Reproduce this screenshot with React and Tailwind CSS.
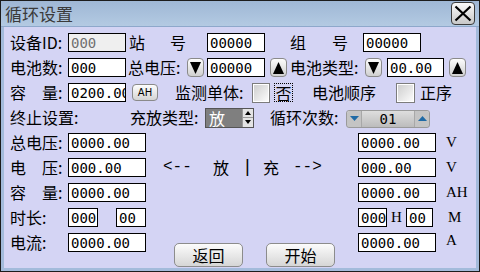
import React from "react";
import clsx from "clsx";

const Field = ({ className, children, disabled }) => (
  <div
    className={clsx(
      "shrink-0 h-[19px] border border-black flex items-center pl-[2px] overflow-hidden whitespace-nowrap font-['DejaVu_Sans_Mono',monospace] text-[14px] leading-none",
      disabled ? "bg-[#efefef] text-[#6f6f6f]" : "bg-white text-black",
      className
    )}
  >
    {children}
  </div>
);

const ArrowBtn = ({ up, className }) => (
  <div
    className={clsx(
      "shrink-0 w-[17px] h-[19px] rounded-[4px] border border-[#8a8a8a] bg-linear-to-b from-[#fdfdfd] to-[#d0d0d0] flex items-center justify-center",
      className
    )}
  >
    <svg width="11" height="12" viewBox="0 0 11 12">
      <polygon points={up ? "5.5,0 11,12 0,12" : "0,0 11,0 5.5,12"} fill="#000" />
    </svg>
  </div>
);

const Check = ({ className }) => (
  <div className={clsx("shrink-0 h-[20px] border border-[#7c7c7c] bg-white p-[1px]", className)}>
    <div className="w-full h-full bg-linear-to-br from-[#cfcfcf] to-[#fbfbfb]" />
  </div>
);

const Unit = ({ children, className }) => (
  <span className={clsx("shrink-0 font-['Liberation_Serif',serif] text-[15px] leading-none", className)}>
    {children}
  </span>
);

const BigButton = ({ children, className }) => (
  <div
    className={clsx(
      "shrink-0 w-[69px] h-[24px] rounded-[5px] border border-[#8c8c8c] bg-linear-to-b from-[#fcfcfc] to-[#d6d6d6] flex items-center justify-center text-[16px]",
      className
    )}
  >
    {children}
  </div>
);

export default function App() {
  return (
    <div className="w-[480px] h-[272px] border border-[#1c1c1c] bg-[#d4d4f4] flex flex-col text-black font-['Noto_Sans_CJK_SC',sans-serif] overflow-hidden">
      {/* title bar */}
      <div className="h-[26px] shrink-0 flex items-center justify-between pl-[4px] pr-[4px] bg-linear-to-b from-[#9fb7d5] to-[#b3cae2] border-b border-[#8ea8cb]">
        <span className="text-[17px] leading-none text-[#3a3a3a]">循环设置</span>
        <div className="w-[24px] h-[23px] rounded-[4px] border border-[#3c3c3c] bg-linear-to-b from-[#fafafa] to-[#c8c8c8] flex items-center justify-center">
          <svg width="18" height="17" viewBox="0 0 18 17">
            <path d="M1.5 1.5 L16.5 15.5 M16.5 1.5 L1.5 15.5" stroke="#000" strokeWidth="2.2" />
          </svg>
        </div>
      </div>

      {/* body */}
      <div className="flex-1 flex flex-col gap-[6px] pt-[6px] pl-[6px] border-l-[3px] border-r-[3px] border-b-[3px] border-[#a3bbdb] text-[16px] leading-[19px] whitespace-nowrap">
        {/* row 1 */}
        <div className="flex items-center h-[19px]">
          <span className="w-[58px] shrink-0">设备ID:</span>
          <Field disabled className="w-[58px]">000</Field>
          <span className="w-[44px] shrink-0 pl-[3px]">站</span>
          <span className="w-[37px] shrink-0">号</span>
          <Field className="w-[58px]">00000</Field>
          <span className="w-[67px] shrink-0 pl-[25px]">组</span>
          <span className="w-[31px] shrink-0">号</span>
          <Field className="w-[58px]">00000</Field>
        </div>

        {/* row 2 */}
        <div className="flex items-center h-[19px]">
          <span className="w-[58px] shrink-0">电池数:</span>
          <Field className="w-[58px]">000</Field>
          <span className="w-[61px] shrink-0 pl-[2px]">总电压:</span>
          <ArrowBtn />
          <Field className="w-[58px] ml-[3px]">00000</Field>
          <ArrowBtn up className="ml-[5px]" />
          <span className="w-[78px] shrink-0 pl-[3px]">电池类型:</span>
          <ArrowBtn />
          <Field className="w-[57px] ml-[5px]">00.00</Field>
          <ArrowBtn up className="ml-[5px]" />
        </div>

        {/* row 3 */}
        <div className="flex items-center h-[19px]">
          <span className="w-[58px] shrink-0">容　量:</span>
          <Field className="w-[58px]">0200.00</Field>
          <div className="ml-[6px] w-[26px] h-[17px] shrink-0 rounded-[4px] border border-[#8a8a8a] bg-linear-to-b from-[#fdfdfd] to-[#d4d4d4] flex items-center justify-center text-[10px] leading-none font-['DejaVu_Sans',sans-serif]">
            AH
          </div>
          <span className="w-[94px] shrink-0 pl-[17px]">监测单体:</span>
          <Check className="w-[18px]" />
          <span className="ml-[4px] w-[19px] h-[19px] shrink-0 border border-dotted border-black flex items-center justify-center leading-none">
            否
          </span>
          <span className="w-[103px] shrink-0 pl-[19px]">电池顺序</span>
          <Check className="w-[19px]" />
          <span className="shrink-0 pl-[5px]">正序</span>
        </div>

        {/* row 4 */}
        <div className="flex items-center h-[19px]">
          <span className="w-[120px] shrink-0">终止设置:</span>
          <span className="w-[75px] shrink-0">充放类型:</span>
          <div className="w-[49px] h-[20px] shrink-0 border border-[#555] bg-[#7f7f7f] flex">
            <span className="flex-1 pl-[3px] text-white leading-[18px]">放</span>
            <div className="w-[11px] flex flex-col bg-[#e4e4e4] border-l border-[#9a9a9a]">
              <div className="flex-1 flex items-center justify-center border-b border-[#9a9a9a]">
                <svg width="6" height="4" viewBox="0 0 6 4"><polygon points="3,0 6,4 0,4" fill="#000" /></svg>
              </div>
              <div className="flex-1 flex items-center justify-center">
                <svg width="6" height="4" viewBox="0 0 6 4"><polygon points="0,0 6,0 3,4" fill="#000" /></svg>
              </div>
            </div>
          </div>
          <span className="w-[92px] shrink-0 pl-[16px]">循环次数:</span>
          <div className="w-[84px] h-[18px] shrink-0 mt-[2px] rounded-[3px] border border-[#9a9a9a] bg-linear-to-b from-[#dedede] to-[#bcbcbc] flex items-center">
            <div className="w-[15px] h-full border-r border-[#a8a8a8] bg-[#c4c4c4] flex items-center justify-center rounded-l-[3px]">
              <svg width="9" height="5" viewBox="0 0 9 5"><polygon points="0,0 9,0 4.5,5" fill="#1f6aa6" /></svg>
            </div>
            <span className="flex-1 text-center font-['DejaVu_Sans_Mono',monospace] text-[14px] leading-none">01</span>
            <div className="w-[15px] h-full border-l border-[#a8a8a8] bg-[#c4c4c4] flex items-center justify-center rounded-r-[3px]">
              <svg width="9" height="5" viewBox="0 0 9 5"><polygon points="4.5,0 9,5 0,5" fill="#1f6aa6" /></svg>
            </div>
          </div>
        </div>

        {/* row 5 */}
        <div className="flex items-center h-[19px]">
          <span className="w-[58px] shrink-0">总电压:</span>
          <Field className="w-[78px]">0000.00</Field>
          <div className="w-[212px] shrink-0" />
          <Field className="w-[78px]">0000.00</Field>
          <Unit className="pl-[10px]">V</Unit>
        </div>

        {/* row 6 */}
        <div className="flex items-center h-[19px]">
          <span className="w-[58px] shrink-0">电　压:</span>
          <Field className="w-[78px]">000.00</Field>
          <div className="w-[212px] shrink-0 flex items-center pl-[17px]">
            <span className="w-[50px] shrink-0 font-['Liberation_Mono',monospace]">&lt;--</span>
            <span className="w-[29px] shrink-0">放</span>
            <span className="w-[21px] shrink-0 font-['Liberation_Mono',monospace] text-[18px]">|</span>
            <span className="w-[30px] shrink-0">充</span>
            <span className="shrink-0 font-['Liberation_Mono',monospace]">--&gt;</span>
          </div>
          <Field className="w-[78px]">000.00</Field>
          <Unit className="pl-[10px]">V</Unit>
        </div>

        {/* row 7 */}
        <div className="flex items-center h-[19px]">
          <span className="w-[58px] shrink-0">容　量:</span>
          <Field className="w-[78px]">0000.00</Field>
          <div className="w-[212px] shrink-0" />
          <Field className="w-[78px]">0000.00</Field>
          <Unit className="pl-[10px]">AH</Unit>
        </div>

        {/* row 8 */}
        <div className="flex items-center h-[19px]">
          <span className="w-[58px] shrink-0">时长:</span>
          <Field className="w-[30px]">000</Field>
          <Field className="w-[30px] ml-[18px]">00</Field>
          <div className="w-[212px] shrink-0" />
          <Field className="w-[29px]">000</Field>
          <Unit className="w-[19px] text-center">H</Unit>
          <Field className="w-[27px]">00</Field>
          <Unit className="pl-[15px]">M</Unit>
        </div>

        {/* row 9 */}
        <div className="flex items-start h-[19px]">
          <span className="w-[58px] shrink-0">电流:</span>
          <Field className="w-[78px]">0000.00</Field>
          <div className="w-[212px] shrink-0 flex pl-[28px] gap-[23px] pt-[10px]">
            <BigButton>返回</BigButton>
            <BigButton>开始</BigButton>
          </div>
          <Field className="w-[78px]">0000.00</Field>
          <Unit className="pl-[10px] leading-[19px]">A</Unit>
        </div>
      </div>
    </div>
  );
}
